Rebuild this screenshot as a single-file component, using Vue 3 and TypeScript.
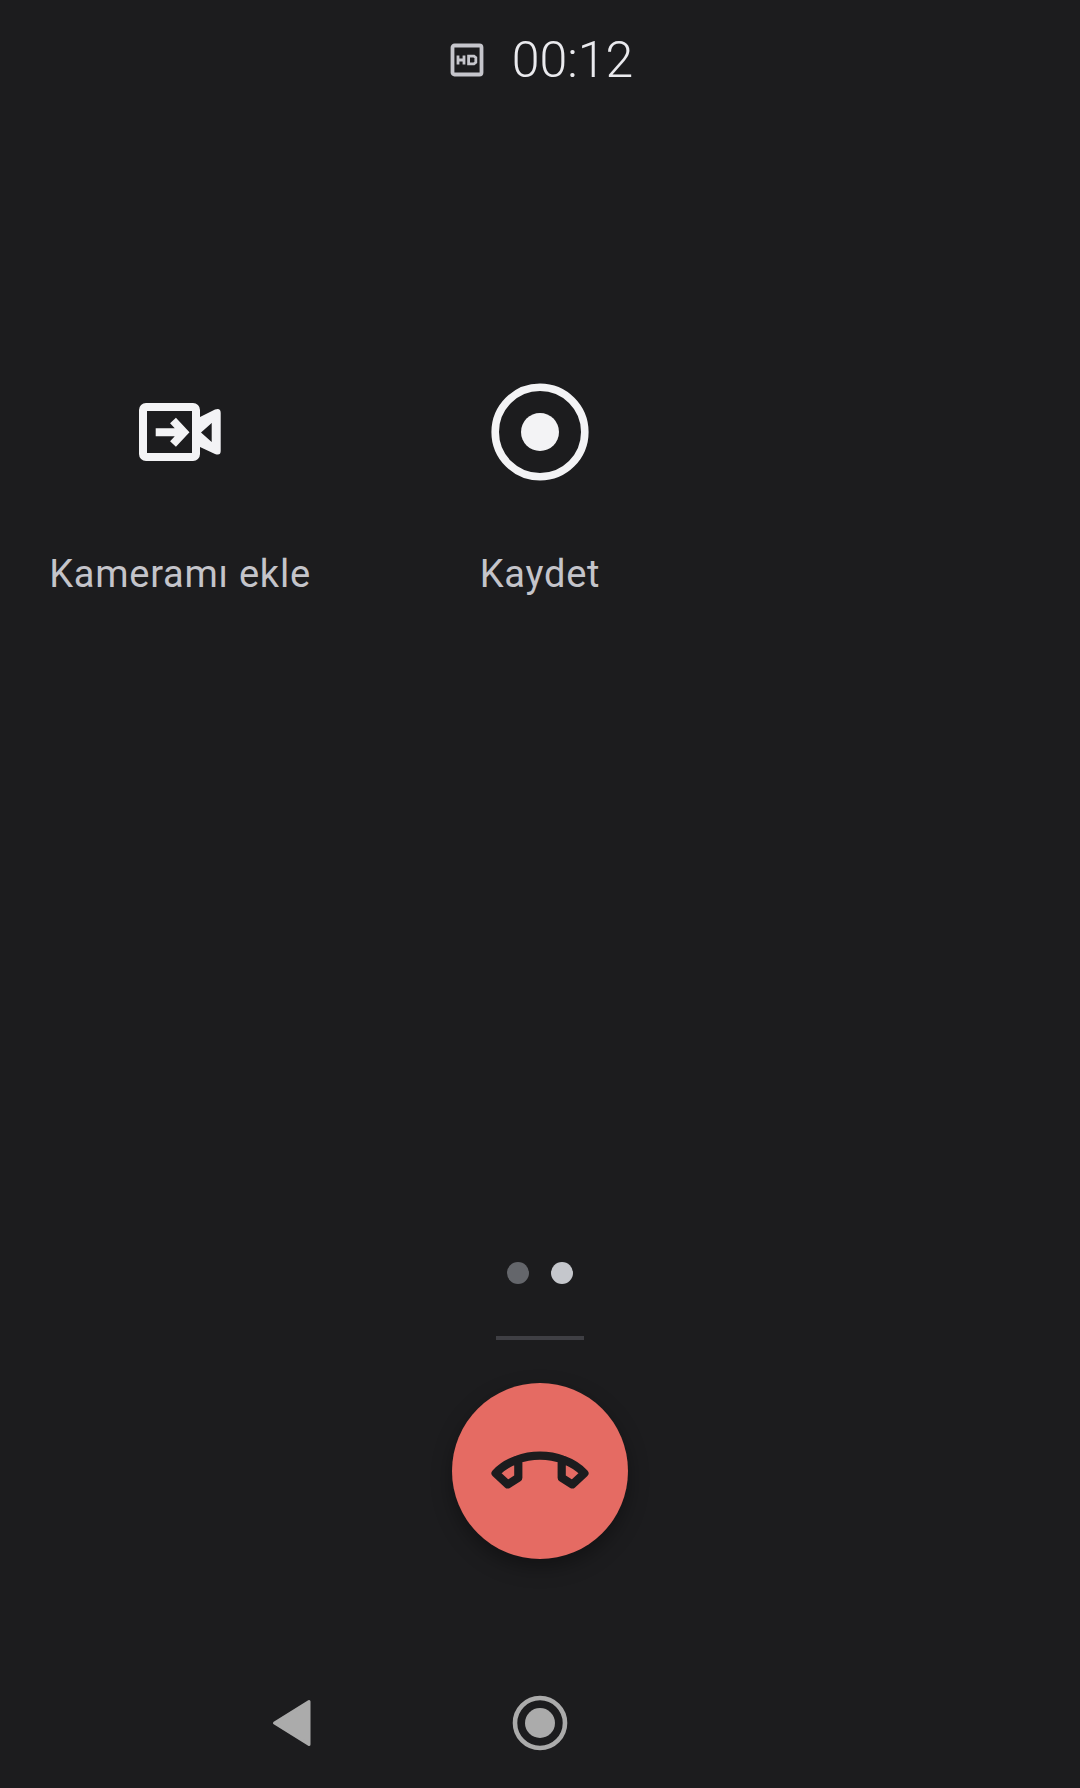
<script setup lang="ts">
const actions: { id: string; label: string }[] = [
  { id: 'camera', label: 'Kameramı ekle' },
  { id: 'record', label: 'Kaydet' },
]
</script>

<template>
  <main class="screen">
    <header class="status">
      <svg class="hd" width="34" height="34" viewBox="0 0 34 34" aria-hidden="true">
        <rect x="2.5" y="2.5" width="29" height="29" rx="2" fill="none" stroke="#c6c6cc" stroke-width="3.8" />
        <path d="M8 12.5v9M8 17h6M14 12.5v9" fill="none" stroke="#c6c6cc" stroke-width="2.8" />
        <path d="M18.6 13.2h5.4l1.8 1.4v4.8l-1.8 1.4h-5.4z" fill="none" stroke="#c6c6cc" stroke-width="2.8" />
      </svg>
      <span class="time">00:12</span>
    </header>

    <section class="actions">
      <div v-for="a in actions" :key="a.id" class="action">
        <div class="icon">
          <svg v-if="a.id === 'camera'" width="86" height="64" viewBox="137 400 86 64" aria-hidden="true">
            <rect x="143" y="407" width="53" height="50" rx="3" fill="none" stroke="#f3f3f5" stroke-width="8" />
            <path fill="#f3f3f5" fill-rule="evenodd" d="M200 417L215 409.5Q220.7 407.5 220.7 413V451Q220.7 456 215 454L200 447ZM201 432.5L211.7 442V423Z" />
            <path d="M155.7 432.3H183M173 420.5L184 432.3L173 444" fill="none" stroke="#f3f3f5" stroke-width="8" />
          </svg>
          <svg v-else width="100" height="100" viewBox="0 0 100 100" aria-hidden="true">
            <circle cx="50" cy="50" r="44.8" fill="none" stroke="#f3f3f5" stroke-width="7.6" />
            <circle cx="50" cy="50" r="19" fill="#f3f3f5" />
          </svg>
        </div>
        <span class="label">{{ a.label }}</span>
      </div>
    </section>

    <div class="pager">
      <span class="dot dim"></span>
      <span class="dot on"></span>
    </div>
    <div class="rule"></div>

    <button class="end" type="button" aria-label="End call">
      <svg width="100" height="42" viewBox="0 0 100 42" aria-hidden="true">
        <path d="M5.6 23.3C17 11 35 5.7 50 5.7S83 11 94.4 23.3L82.3 34.4L71.7 27.8V9.3M5.6 23.3L17.7 34.4L28.3 27.8V9.3" fill="none" stroke="#1c1c1e" stroke-width="8.2" stroke-linejoin="round" stroke-linecap="round" />
      </svg>
    </button>

    <nav class="nav">
      <div class="nav-cell">
        <svg width="40" height="48" viewBox="0 0 40 48" aria-hidden="true">
          <path d="M2.5 24L37 2.5V45.5Z" fill="#ababab" stroke="#ababab" stroke-width="3" stroke-linejoin="round" />
        </svg>
      </div>
      <div class="nav-cell">
        <svg width="56" height="56" viewBox="0 0 56 56" aria-hidden="true">
          <circle cx="28" cy="28" r="25" fill="none" stroke="#ababab" stroke-width="4.6" />
          <circle cx="28" cy="28" r="15" fill="#ababab" />
        </svg>
      </div>
      <div class="nav-cell"></div>
    </nav>
  </main>
</template>

<style scoped>
.screen {
  width: 1080px;
  height: 1788px;
  background: #1c1c1e;
  display: flex;
  flex-direction: column;
  align-items: center;
  font-family: Roboto, "Liberation Sans", sans-serif;
  overflow: hidden;
}
.status {
  display: flex;
  align-items: center;
  justify-content: center;
  gap: 28px;
  height: 60px;
  margin-top: 30px;
  padding-left: 3px;
}
.time {
  font-size: 50px;
  line-height: 60px;
  color: #eaeaee;
  font-weight: 300;
}
.actions {
  width: 1080px;
  display: grid;
  grid-template-columns: repeat(3, 360px);
  margin-top: 292px;
}
.action {
  display: flex;
  flex-direction: column;
  align-items: center;
}
.icon {
  height: 100px;
  display: flex;
  align-items: center;
  justify-content: center;
}
.label {
  margin-top: 70px;
  font-size: 38px;
  line-height: 44px;
  color: #c4c4ca;
  letter-spacing: 0.76px;
  font-weight: 400;
}
.pager {
  display: flex;
  gap: 22px;
  margin-top: 666px;
}
.dot {
  width: 22px;
  height: 22px;
  border-radius: 50%;
}
.dim { background: #64666b; }
.on { background: #c5c7cc; }
.rule {
  width: 88px;
  height: 4px;
  background: #3f3f44;
  margin-top: 52px;
}
.end {
  width: 176px;
  height: 176px;
  border-radius: 50%;
  border: 0;
  padding: 0;
  margin-top: 43px;
  background: #e56b63;
  box-shadow: 0 8px 20px rgba(0, 0, 0, 0.35);
  display: flex;
  align-items: center;
  justify-content: center;
}
.end svg { display: block; }
.nav {
  width: 744px;
  display: grid;
  grid-template-columns: repeat(3, 248px);
  margin-top: 136px;
}
.nav-cell {
  height: 56px;
  display: flex;
  align-items: center;
  justify-content: center;
}
</style>

<style>
body { background: #1c1c1e; }
</style>
